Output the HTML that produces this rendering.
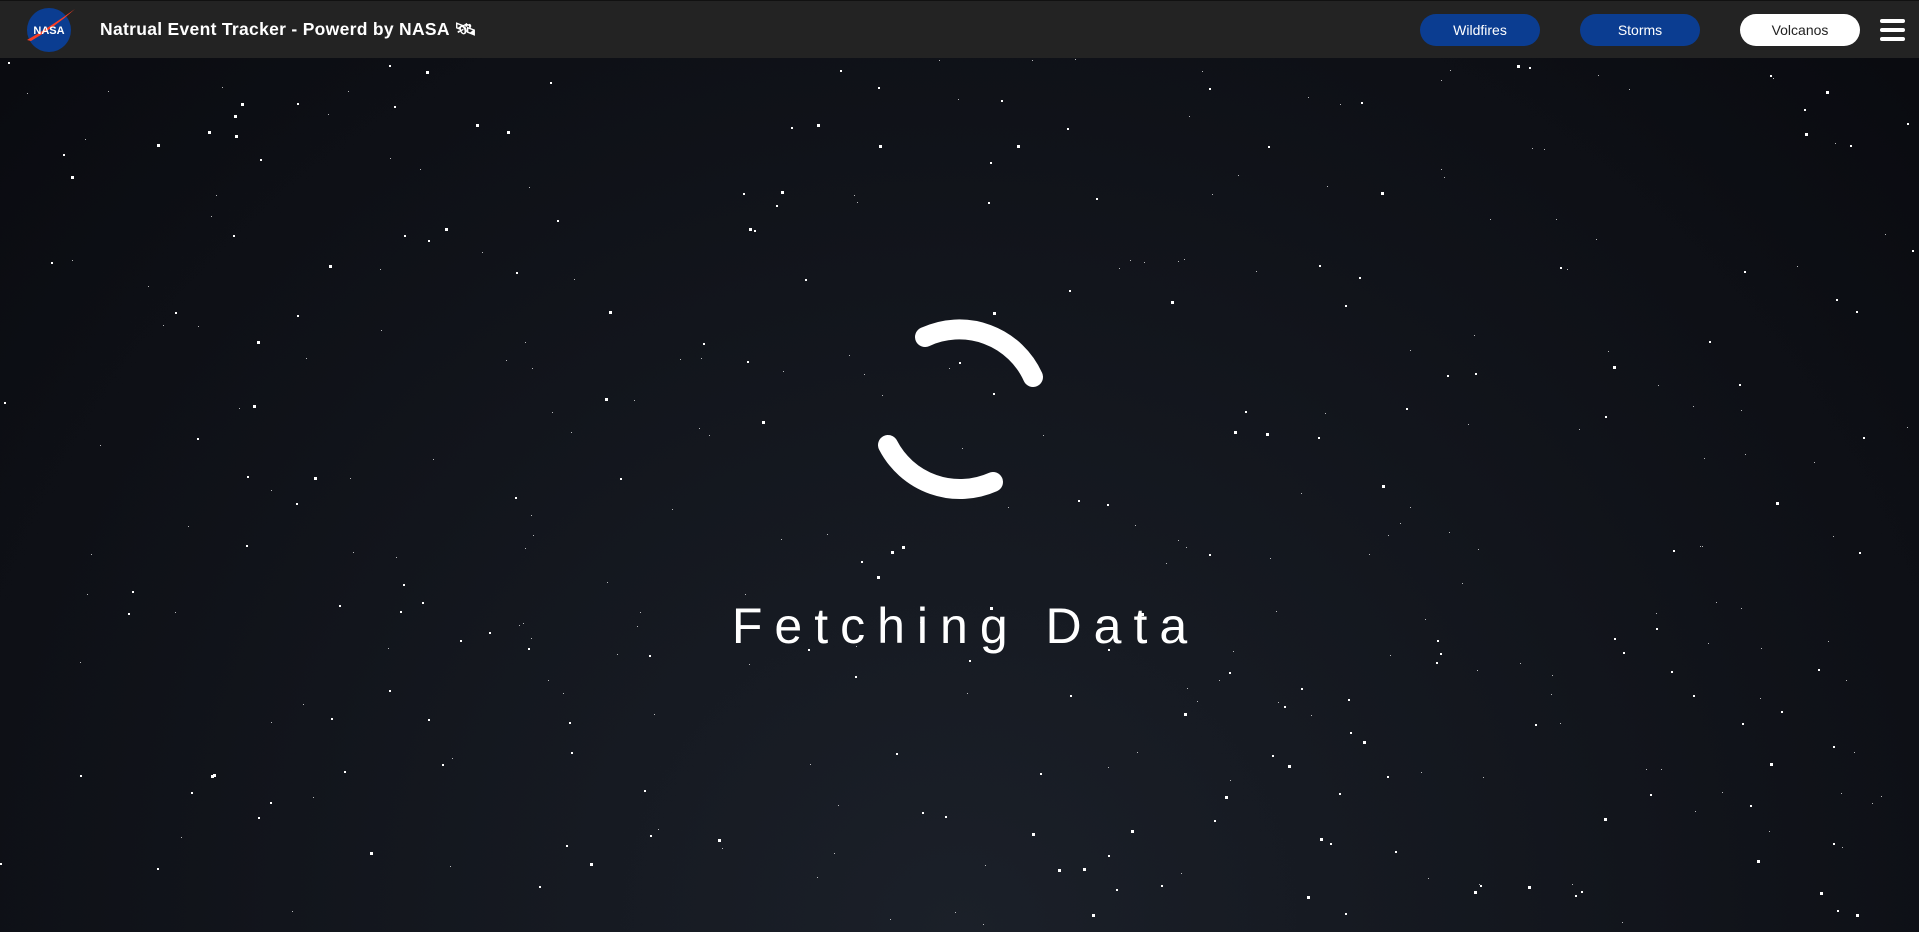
<!DOCTYPE html>
<html><head><meta charset="utf-8"><style>
html,body{margin:0;padding:0;width:1919px;height:932px;overflow:hidden}
body{background:radial-gradient(ellipse at 50% 100%,#1b2029 0%,#090a0f 100%);font-family:"Liberation Sans",sans-serif;position:relative}
#stars{position:absolute;left:0;top:0;width:1919px;height:932px}
header{position:absolute;left:0;top:0;width:1919px;height:57px;background:#232323;border-top:1px solid #111}
.title{position:absolute;left:100px;top:18px;color:#fff;font-weight:bold;font-size:17.5px;letter-spacing:0.3px}
.btn{position:absolute;top:13px;width:120px;height:32px;border-radius:16px;background:#0b3d91;color:#fff;font-size:14px;text-align:center;line-height:32px}
.ham span{position:absolute;left:1880px;width:25px;height:4px;border-radius:2px;background:#fff}
.txt{position:absolute;left:6px;width:1919px;top:597px;text-align:center;color:#fff;font-size:50px;letter-spacing:12px;font-weight:300}
</style></head><body>
<svg id="stars" width="1919" height="932"></svg>
<header>
<svg style="position:absolute;left:25px;top:4px" width="52" height="48" viewBox="0 0 52 48">
<circle cx="24" cy="25" r="22" fill="#0b3d91"/>
<path d="M2 35 Q25 22 50 4 Q30 22 6 36Z" fill="#fc3d21"/>
<text x="24" y="29" text-anchor="middle" font-family="Liberation Sans" font-weight="bold" font-size="11" fill="#fff">NASA</text>
</svg>
<div class="title">Natrual Event Tracker - Powerd by NASA 🛰</div>
<div class="btn" style="left:1420px">Wildfires</div>
<div class="btn" style="left:1580px">Storms</div>
<div class="btn" style="left:1740px;background:#fff;color:#222">Volcanos</div>
<div class="ham"><span style="top:18px"></span><span style="top:27px"></span><span style="top:36px"></span></div>
</header>
<svg style="position:absolute;left:0;top:0" width="1919" height="932">
<g fill="none" stroke="#fff" stroke-width="20" stroke-linecap="round">
<path d="M925 337 A81 81 0 0 1 1033 377"/>
<path d="M888 445 A81 81 0 0 0 993 482"/>
</g></svg>
<div class="txt">Fetching Data</div>
<script>
var s=document.getElementById('stars'),seed=7,h='';
function r(){seed=(seed*16807)%2147483647;return seed/2147483647;}
for(var i=0;i<400;i++){var x=r()*1919,y=57+r()*875,z=r()<0.15?3:(r()<0.4?2:1);
h+='<rect x="'+x.toFixed(0)+'" y="'+y.toFixed(0)+'" width="'+z+'" height="'+z+'" fill="#fff" opacity="'+(z==1?0.7:1)+'"/>';}
s.innerHTML=h;
</script>
</body></html>
